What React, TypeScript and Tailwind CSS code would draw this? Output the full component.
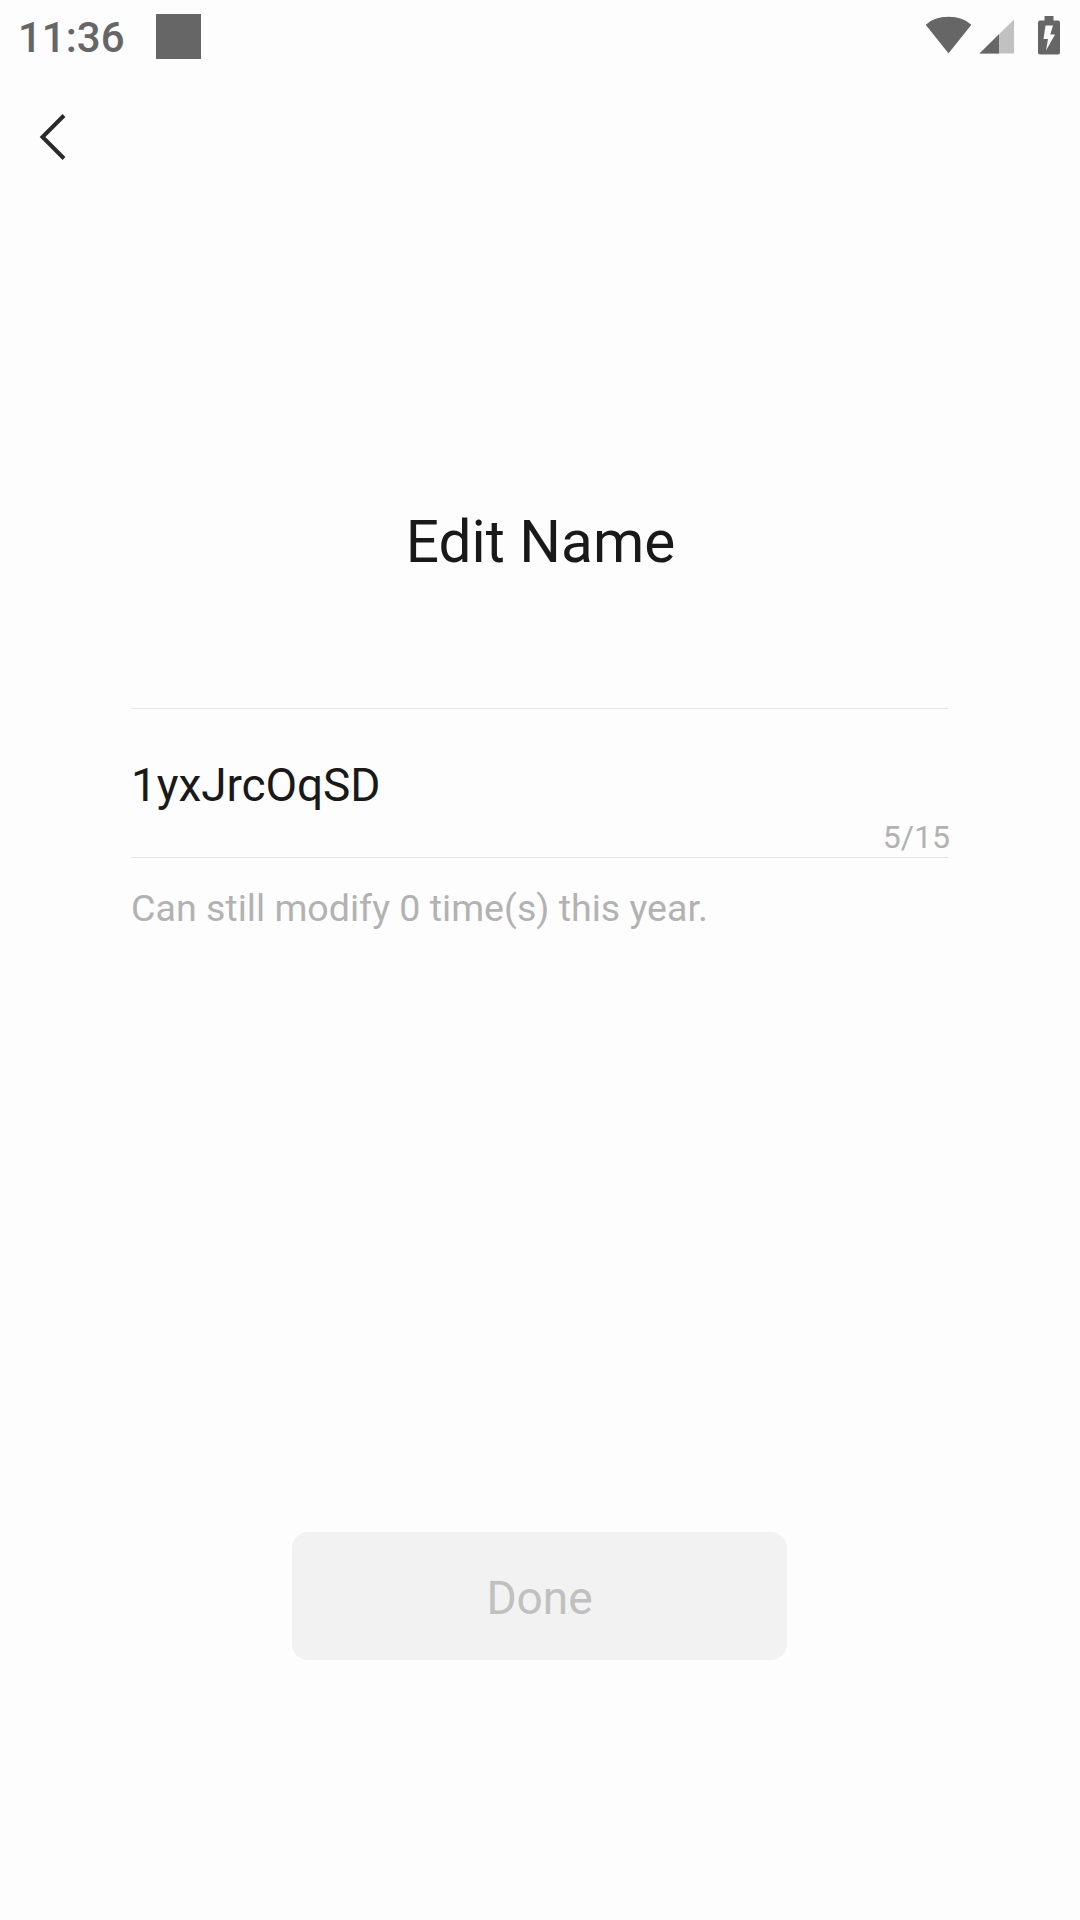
function StatusIcons() {
  return (
    <svg className="h-[72px] w-[180px]" viewBox="0 0 180 72" fill="#666666">
      <path d="M26.5 25 C37 14.8 60 14.8 70.5 25 L48.5 52.5 Z" stroke="#666666" strokeWidth="1.2" strokeLinejoin="round" />
      <path d="M79.5 53.5 L114 19.5 V53.5 Z" fill="#c1c1c1" />
      <path d="M79.5 53.5 L99 34.3 V53.5 Z" />
      <path
        fillRule="evenodd"
        d="M144.5 16 H153.5 V20.5 H158 Q160 20.5 160 22.5 V52.5 Q160 54.5 158 54.5 H140 Q138 54.5 138 52.5 V22.5 Q138 20.5 140 20.5 H144.5 Z M145.5 25.5 L143.5 39 H148 L146 50.5 L155 34.5 H150.3 L153 25.5 Z"
      />
    </svg>
  );
}

export default function App() {
  return (
    <div className="flex h-[1920px] w-[1080px] flex-col overflow-hidden bg-[#fdfdfd] font-['Roboto',sans-serif] text-[#191919]">
      <header className="flex h-[72px] shrink-0 items-start justify-between">
        <div className="flex items-start pl-[18px]">
          <span className="w-[138px] pt-px text-[42px] leading-[73px] font-medium text-[#666666]">11:36</span>
          <span className="mt-[14px] size-[45px] bg-[#666666]" />
        </div>
        <StatusIcons />
      </header>

      <nav className="h-[130px] shrink-0">
        <button aria-label="Back" className="block h-[130px] w-[106px]">
          <svg className="h-[130px] w-[106px]" viewBox="0 0 106 130" fill="none" stroke="#2a2a2a" strokeWidth="4">
            <path d="M64 43.5 L42.5 65 L64 86.5" />
          </svg>
        </button>
      </nav>

      <main className="flex grow flex-col items-center">
        <h1 className="mt-[300px] pl-px text-[58.5px] leading-[80px]">Edit Name</h1>

        <section className="mt-[126px] w-[818px]">
          <div className="mr-px flex h-[150px] justify-between border-y border-[#e6e6e6]">
            <span className="pt-[46px] text-[46px] leading-[60px] tracking-[-0.1px]">1yxJrcOqSD</span>
            <span className="-mr-[2px] pt-[108px] text-[32px] leading-[40px] text-[#b2b2b2]">5/15</span>
          </div>
          <p className="mt-[25px] text-[37.6px] leading-[50px] text-[#b2b2b2]">Can still modify 0 time(s) this year.</p>
        </section>

        <button className="mt-[599px] mr-px flex h-[128px] w-[495px] items-center justify-center rounded-[16px] bg-[#f2f2f2] pt-[4px] text-[46px] text-[#c0c0c0]">
          Done
        </button>
      </main>
    </div>
  );
}
